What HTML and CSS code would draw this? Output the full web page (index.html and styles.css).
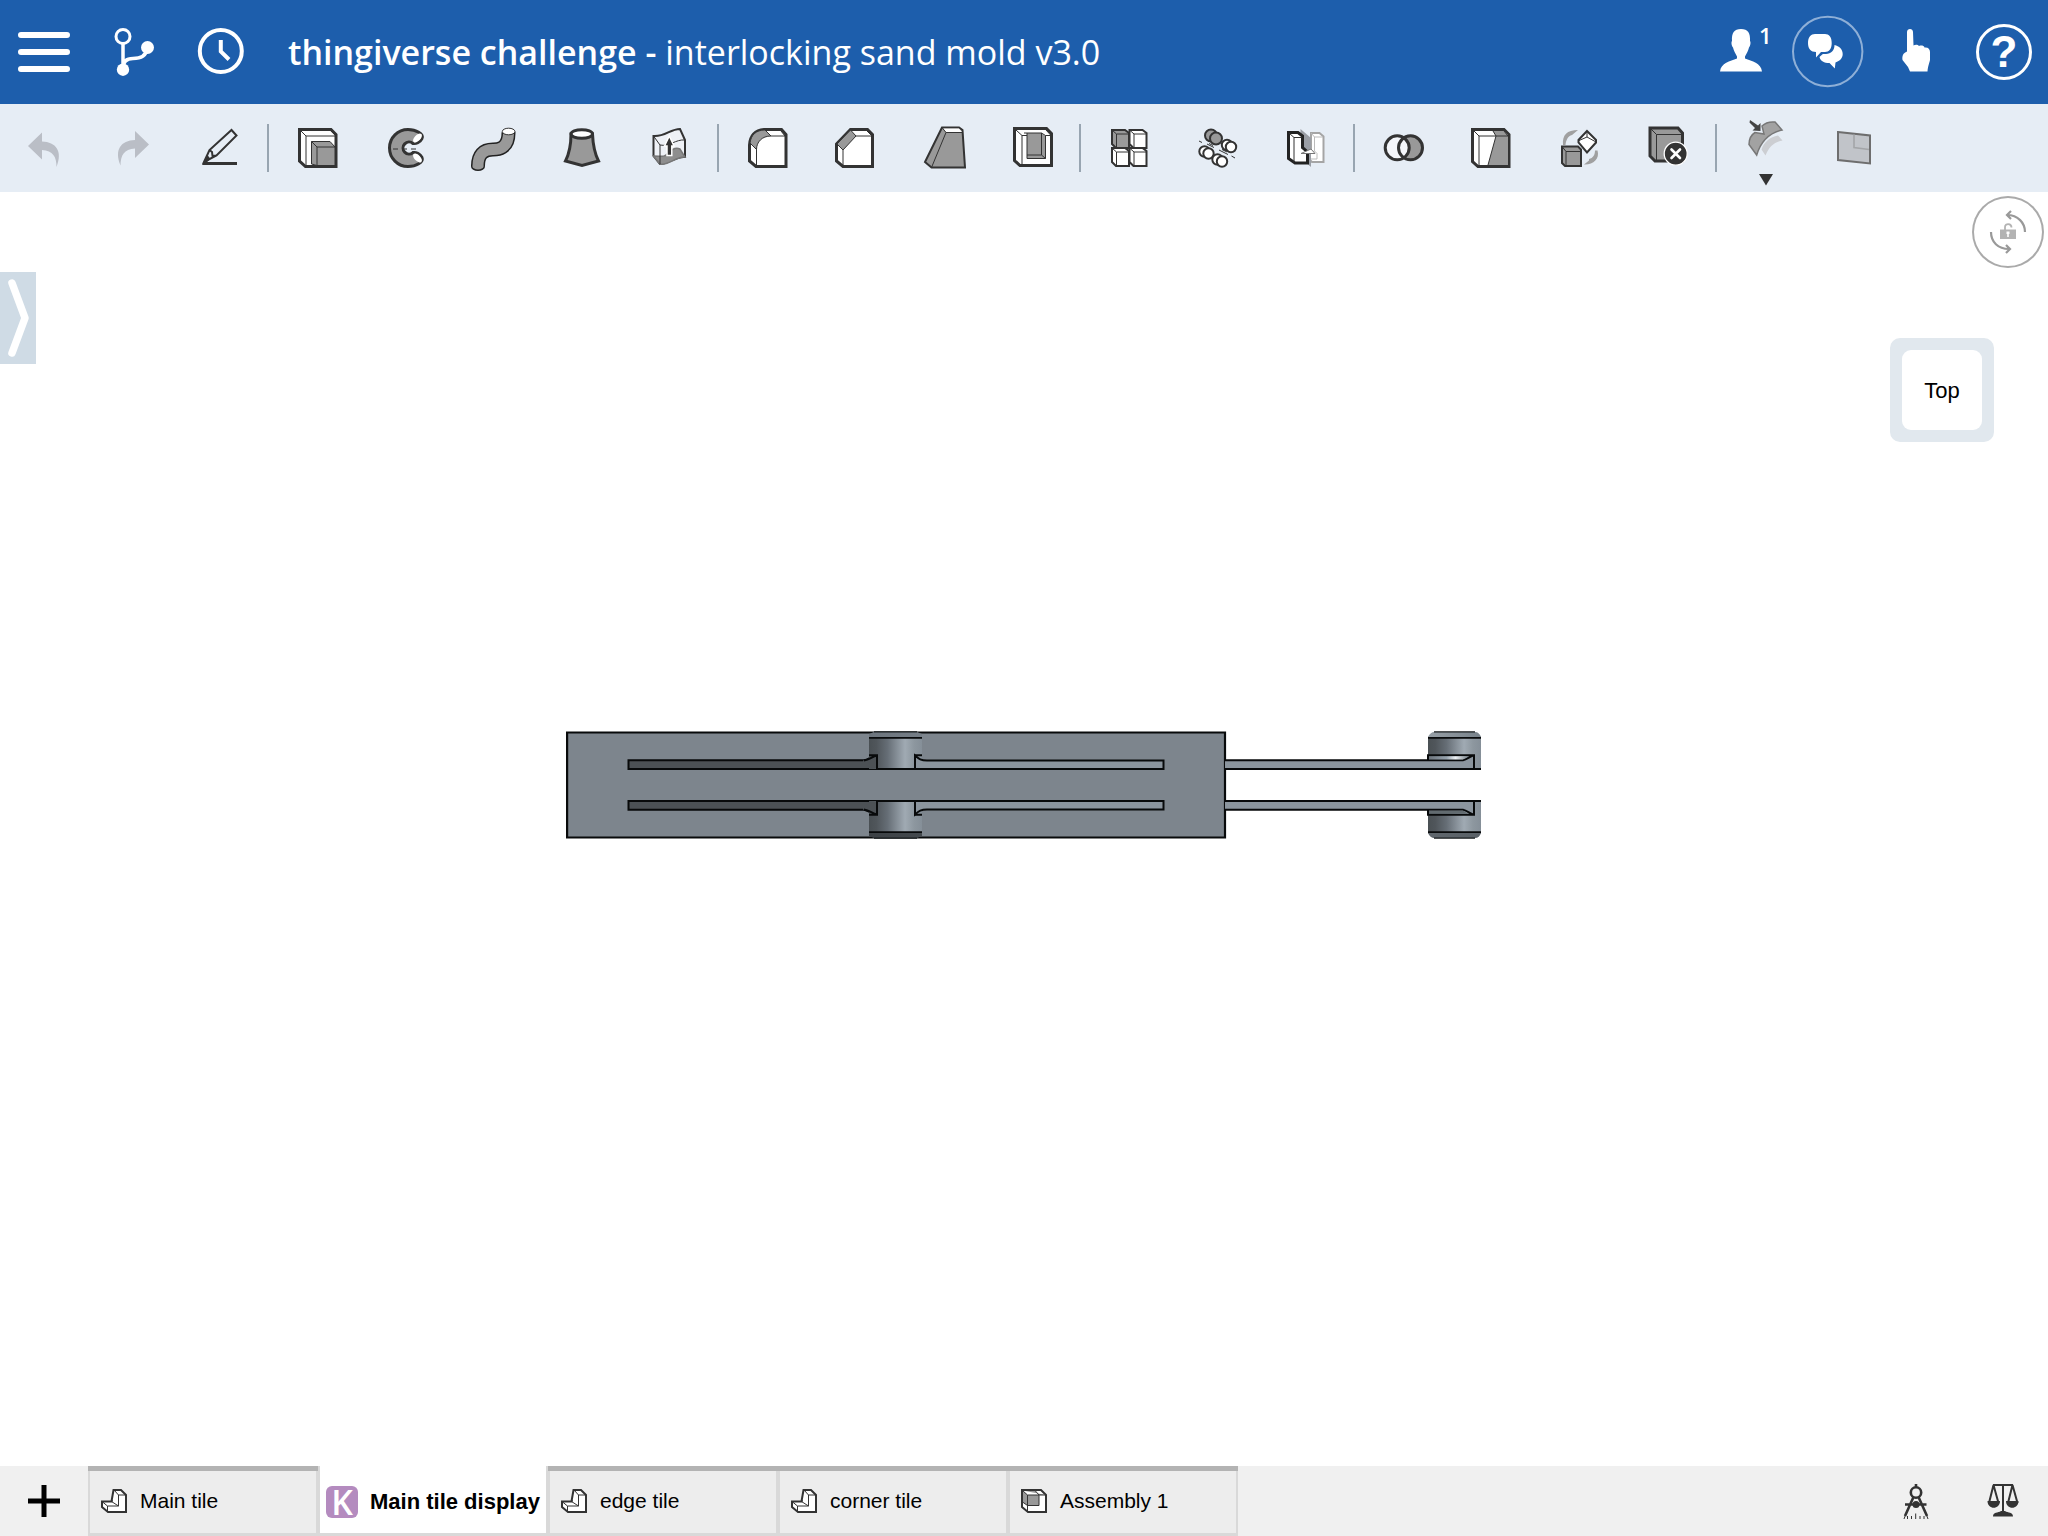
FILE: index.html
```html
<!DOCTYPE html>
<html lang="en">
<head>
<meta charset="utf-8">
<meta name="viewport" content="width=device-width, initial-scale=1">
<title>thingiverse challenge - interlocking sand mold v3.0</title>
<link rel="stylesheet" href="styles.css">
</head>
<body>
<header class="header">
  <button class="hbtn" aria-label="Menu"><svg viewBox="0 0 88 104"><path class="w" stroke-width="6" stroke-linecap="round" d="M21 35H67M21 52H67M21 69H67"/></svg></button>
  <button class="hbtn" aria-label="Versions"><svg viewBox="0 0 88 104"><circle class="w" stroke-width="3" cx="35" cy="36.500" r="7"/><path class="w" stroke-width="3.500" d="M35 44V68C35 60 40 58.500 45 58.500C53 58.500 58 56 59 49"/><circle cx="35" cy="69.700" r="6.200" fill="#fff"/><circle cx="59.500" cy="47.500" r="6.500" fill="#fff"/></svg></button>
  <button class="hbtn" aria-label="History"><svg viewBox="0 0 88 104"><circle class="w" stroke-width="4" cx="44.800" cy="51" r="21"/><path class="w" stroke-width="4" d="M44.800 40V51.500L53 59.500"/></svg></button>
  <h1 class="title"><b>thingiverse challenge - </b>interlocking sand mold v3.0</h1>
  <button class="hbtn" aria-label="Collaborators"><svg viewBox="0 0 88 104"><path fill="#fff" d="M45 29C38 29 35.500 33 36 41C35 42 35.500 46 37 47.500C38 51 39 53 41 56.500V58.500C34 61 25 63 24 71.500H66C65 63 56 61 49 58.500V56.500C51 53 52 51 53 47.500C54.500 46 55 42 54 41C54.500 33 52 29 45 29Z"/></svg><span class="count">1</span></button>
  <button class="hbtn" aria-label="Comments"><svg viewBox="0 0 88 104"><circle cx="43.700" cy="51.500" r="34.700" fill="none" stroke="#8eafd7" stroke-width="2"/><path fill="#fff" d="M31 34H41C45 34 47.700 37 47.700 43C47.700 49 45 52 41 52H37L32 57.500V52C27 52 24 49 24 43C24 37 27 34 31 34Z"/><path fill="#fff" d="M50.500 45C55 46 58.700 49 58.700 54C58.700 58 56 61 51.500 62.500L50.800 68.500L45.500 63C40 63 36.500 61 35.500 57C37 55.500 38 54.500 39 54H42C47 54 50.500 50.500 50.500 45Z"/></svg></button>
  <button class="hbtn" aria-label="Touch mode"><svg viewBox="0 0 88 104"><path fill="#fff" d="M35 32C35 28 41 28 41 32L41.500 45.500C43 44.500 46 44.500 47 46C49 45 52 45.500 52.500 47.500C56 47 58 49 58 52V60C57 64 56 66 55.500 71.500H38L36 67L30.500 60C30 56 31 53 35 51.500Z"/></svg></button>
  <button class="hbtn" aria-label="Help"><span class="help">?</span></button>
</header>

<nav class="toolbar" aria-label="Features">
  <button class="tool" aria-label="Undo"><svg viewBox="0 0 88 88"><path fill="#babec6" d="M28 42L42 28.500V37.500C56 38 63 47 56.500 63C56.500 53 53 46.500 42 46V55.500Z"/></svg></button>
  <button class="tool" aria-label="Redo"><svg viewBox="0 0 88 88"><path fill="#babec6" d="M61 40.500L47 27V36C33 36.500 26 45.500 32.500 61.500C32.500 51.500 36 45 47 44.500V54Z"/></svg></button>
  <button class="tool" aria-label="Sketch"><svg viewBox="0 0 88 88"><path class="o2" fill="none" d="M28 58L33.500 46L55.500 26L60.500 31.500L40.500 51.500ZM33.500 46L36 48L36.500 52L40.500 51.500"/><path fill="#333" d="M26 61L31.500 51L34.500 55L31 58H61V61Z"/></svg></button>
  <span class="sep"></span>
  <button class="tool" aria-label="Extrude"><svg viewBox="0 0 88 88"><path class="o3" fill="#fff" d="M25.500 25.500H57L62 30.500V62.500H31.500L25.500 57Z"/><path class="o1" fill="none" d="M27 27L32 32H62M32 32V62M57 27L61 31"/><path class="o1" fill="#999" d="M37.500 37.500H56L61 43V61.500H43L37.500 60ZM37.500 37.500L43 43V61M43 43H61"/></svg></button>
  <button class="tool" aria-label="Revolve"><svg viewBox="0 0 88 88"><path class="o3" fill="#999" d="M46 25.500A18.500 18.500 0 0 0 46 62.500C54 62.500 62 58 60 53.500C58 49.500 54 48 51 48.500A6 6 0 1 1 51 39.500C54 40 58 38.500 60 34.500C62 30 54 25.500 46 25.500Z"/><ellipse fill="#fff" cx="55.500" cy="34" rx="5.500" ry="3" transform="rotate(-45 55.500 34)"/><ellipse fill="#fff" cx="55.500" cy="54" rx="5.500" ry="3" transform="rotate(45 55.500 54)"/><path class="o1" stroke-width="2" stroke-dasharray="5 4" d="M31 45H56"/></svg></button>
  <button class="tool" aria-label="Sweep"><svg viewBox="0 0 88 88"><g fill="none"><path stroke="#222" stroke-width="14" d="M58.500 28C59 46 46 45.500 43 45.500C33 45.500 28 51 28 62"/><ellipse cx="28" cy="62.500" rx="7" ry="4.500" fill="#222"/><path stroke="#999" stroke-width="11" d="M58.500 28C59 46 46 45.500 43 45.500C33 45.500 28 51 28 62"/><ellipse cx="28" cy="62.500" rx="5.500" ry="3" fill="#999"/></g><ellipse class="o1" fill="#fff" cx="58.600" cy="27.500" rx="6.300" ry="3.300" stroke-width="1.500"/></svg></button>
  <button class="tool" aria-label="Loft"><svg viewBox="0 0 88 88"><path class="o3" fill="#999" d="M33 30C33 42 31 50 27.500 57L44 61.500L60.500 57C57 50 55 42 54.500 30Z"/><ellipse class="o3" fill="#fff" cx="43.800" cy="30" rx="10.700" ry="4.300"/></svg></button>
  <button class="tool" aria-label="Thicken"><svg viewBox="0 0 88 88"><path class="o2" fill="#eef1f6" d="M27.500 32C39 33 44 25 54 25L59 36V53C50 52 43 60 34 60L27.500 52Z"/><path fill="#8e8e8e" stroke="#777" stroke-width="1.500" d="M27.500 52C35 52 38 54 42 49C46 45 50 43 54 45L59 53C50 52 43 62 34 60Z"/><path class="o1" fill="none" d="M27.500 32L34 41V60M34 41C43 43 50 35 59 36"/><path fill="#333" stroke="#fff" stroke-width="1.500" d="M43.300 32L48 42H45.800V51.500H41V42H38.500Z"/></svg></button>
  <span class="sep"></span>
  <button class="tool" aria-label="Fillet"><svg viewBox="0 0 88 88"><path class="o3" fill="#fff" d="M25.500 41C26 32 31 26 40 25.500H57.500L62 30.500V62.500H32L25.500 57Z"/><path class="o1" fill="#999" d="M26 39C27 31 32 26 41 26L47 32C38 32 32.500 38 32.500 45.500Z"/><path class="o1" fill="none" d="M32.500 45V62M47 32H61L57 27"/></svg></button>
  <button class="tool" aria-label="Chamfer"><svg viewBox="0 0 88 88"><path class="o3" fill="#fff" d="M24.500 40L38.500 25.500H55.500L60.500 30.500V62.500H31L24.500 57Z"/><path class="o1" fill="#999" d="M25 40L38.500 26L44 32L31 46Z"/><path class="o1" fill="none" d="M31 46V62M44 32H60L55 27"/></svg></button>
  <button class="tool" aria-label="Draft"><svg viewBox="0 0 88 88"><path class="o2" fill="#999" d="M42 23.500H59L62.500 26L65 63.500H31.500L25 58Z"/><path fill="#fff" d="M43 24.500H59L62 28H46Z"/><path class="o1" stroke-width="1.500" fill="none" d="M42 23.500L46 28.500H62M46 28.500L31.500 63.500"/></svg></button>
  <button class="tool" aria-label="Shell"><svg viewBox="0 0 88 88"><path class="o3" fill="#fff" d="M26.500 24.500H58.500L63.500 29.500V61.500H32L26.500 56.500Z"/><path fill="#999" d="M39 29H53L57.500 32V54.500H39Z"/><path class="o1" fill="none" d="M28 26L34 31.500V60M34 31.500H39M39 29V54.500H57.500V31.500L53.500 29V51L57.500 54.500M39 51H53.500M36 29H53.500M57.500 31.500H63L58 26"/></svg></button>
  <span class="sep"></span>
  <button class="tool" aria-label="Linear pattern"><svg viewBox="0 0 88 88"><defs><g id="cube"><path class="o2" d="M1 1H14L18 4V19H5L1 15Z"/><path class="o1" fill="none" d="M1 1L5.500 5H18M5.500 5V18"/></g></defs><use href="#cube" x="25" y="25" fill="#999"/><use href="#cube" x="42.500" y="25" fill="#fff"/><use href="#cube" x="25" y="43" fill="#fff"/><use href="#cube" x="42.500" y="43" fill="#fff"/></svg></button>
  <button class="tool" aria-label="Circular pattern"><svg viewBox="0 0 88 88"><g class="o2" fill="#999"><circle cx="37" cy="31.500" r="6"/><circle cx="42" cy="34.500" r="6"/></g><g class="o2" fill="#fff"><circle cx="53" cy="41" r="5.200"/><circle cx="57" cy="43" r="5.200"/><circle cx="30.500" cy="47.500" r="5.200"/><circle cx="34.500" cy="49.500" r="5.200"/><circle cx="43.500" cy="55.500" r="5.200"/><circle cx="48" cy="57.500" r="5.200"/></g><path class="o1" fill="none" d="M25 37L28 38.500M33 40L40 43.500M35 39.500L39 41.500M45 46L54 50.500M48 45.500L53 48M57.500 52L61 54"/></svg></button>
  <button class="tool" aria-label="Mirror"><svg viewBox="0 0 88 88"><path fill="#fff" stroke="#a5a5a5" stroke-width="2" d="M49 29H57.500L61.500 32.500V58H50L47 55V49L49 47Z"/><path fill="none" stroke="#bbb" stroke-width="1" d="M49 29L52.500 33H61M52.500 33V47L47 49M52.500 47L55 49.500V55H47"/><path fill="#9a9ea5" d="M38.500 25L49 34V63L38.500 54Z"/><path stroke="#222" stroke-width="3" fill="#fff" d="M26.500 28.500H36L40.500 32V43.500L45.500 48V59H33L26.500 54.500Z"/><path class="o1" fill="none" d="M27 29L32 33.500H40M32 33.500V58"/><path fill="#fff" stroke="#777" stroke-width="1" d="M39 49.500L49 45L53 49.500Z"/></svg></button>
  <span class="sep"></span>
  <button class="tool" aria-label="Boolean"><svg viewBox="0 0 88 88"><circle cx="50.500" cy="43.800" r="12" fill="#999"/><circle cx="37.200" cy="43.800" r="12" fill="#f4f6fa"/><g class="o3" fill="none"><circle cx="50.500" cy="43.800" r="12"/><circle cx="37.200" cy="43.800" r="12"/></g></svg></button>
  <button class="tool" aria-label="Split"><svg viewBox="0 0 88 88"><path class="o3" fill="#fff" d="M24.500 25.500H56L61 30.500V62.500H30L24.500 57.500Z"/><path fill="#999" d="M45 27H56L60 31V61H40L48 32Z"/><path class="o1" fill="none" d="M26 27L31 32H60L56 27M31 32V61M45 27L48 32L40 61"/></svg></button>
  <button class="tool" aria-label="Transform"><svg viewBox="0 0 88 88"><path fill="#a0a0a0" d="M27 41C26 31 31 26 42 26L36 31C32 32 30 36 29.500 41ZM59 46.500H61.500C64 55 57 61 48 60.500L53 56.500V55C57 54 59 51 59 46.500Z"/><path class="o2" fill="#999" d="M26 42.500H42L45 45.500V62H29L26 59Z"/><path class="o1" fill="none" d="M26 42.500L30 47.500H45M30 47.500V62"/><path class="o2" fill="#fff" d="M51 27L60 36V38.500L51 48.500L42.500 38.500V36Z"/><path class="o1" fill="none" d="M51 33L42 37M51 33V27M51 33L60 38"/></svg></button>
  <button class="tool" aria-label="Delete part"><svg viewBox="0 0 88 88"><path class="o3" fill="#999" d="M26 24H54L58.500 29V57H31L26 52Z"/><path class="o1" fill="none" d="M27 25L32.500 30.500H58M32.500 30.500V57"/><circle cx="51.700" cy="49.700" r="11.500" fill="#333" stroke="#fff" stroke-width="1.300"/><path class="w" stroke-width="2.600" stroke-linecap="round" d="M47.500 45.500L56 54M56 45.500L47.500 54"/></svg></button>
  <span class="sep"></span>
  <button class="tool" aria-label="Modify surface"><svg viewBox="0 0 88 88"><path fill="#ccced2" d="M39.500 45.500L43.500 51.500C47 43 52 38 60.500 36.500L56 31.500C48 33 42 38 39.500 45.500Z"/><path fill="#a2a2a2" stroke="#777" stroke-width="1.500" d="M33 28.500C29 31 27 36 27 40.500L34.700 51C39 37 47 29 60 26L53 18C48 17.500 43 19 40 22L42 30Z"/><path fill="#444" d="M28 16L36 21.500L38.500 19L38.500 27L30.500 26.500L33 24L27.500 18.500Z"/><path fill="#333" d="M37 70H51L44 81.500Z"/></svg></button>
  <button class="tool" aria-label="Plane"><svg viewBox="0 0 88 88"><path fill="#c1c4c9" stroke="#6e6e6e" stroke-width="2" d="M28 28L60 31.500V59.500L28 56Z"/><path fill="none" stroke="#a3a5a8" stroke-width="1.600" d="M44 30.500V43.500L59 45.500"/></svg></button>
</nav>

<main class="canvas">
  <button class="panel-handle" aria-label="Open feature list"><svg viewBox="0 0 36 92"><path class="w" stroke-width="7.500" stroke-linecap="round" stroke-linejoin="round" d="M12 11L25 46L12 81"/></svg></button>
  <button class="rotate-lock" aria-label="Rotation lock"><svg viewBox="0 0 72 72"><g fill="none" stroke="#999" stroke-width="2.200"><path d="M53 36C53 27 46 19 35 19M39 15L35 19L39 23M19 36C19 46 26 53 37 53M34 49L38 53L34 57"/></g><path fill="none" stroke="#b3b3b3" stroke-width="1.800" d="M33 34V31C33 27 39.500 27 39.500 31.500"/><path fill="#b3b3b3" d="M28 33.500H44V43H28Z"/><path fill="#fff" d="M34.500 35.500H37.500V38H36.800V41H35.200V38H34.500Z"/></svg></button>
  <button class="view-cube">Top</button>
  <svg class="model" viewBox="0 0 916 110" role="img" aria-label="Top view of the main tile">
    <defs>
      <linearGradient id="peg"><stop offset="0" stop-color="#4a5054"/><stop offset=".14" stop-color="#50565b"/><stop offset=".35" stop-color="#666e76"/><stop offset=".68" stop-color="#a0aab3"/><stop offset=".85" stop-color="#8d979f"/><stop offset="1" stop-color="#858f98"/></linearGradient>
      <linearGradient id="rim"><stop offset="0" stop-color="#6d757d"/><stop offset=".45" stop-color="#96a2ad"/><stop offset=".68" stop-color="#eef2f5"/><stop offset="1" stop-color="#78828a"/></linearGradient>
      <linearGradient id="rimlow"><stop offset="0" stop-color="#3c4145"/><stop offset=".6" stop-color="#727a81"/><stop offset="1" stop-color="#5a6167"/></linearGradient>
      <g id="half" stroke="#080a0b" stroke-width="2">
        <path fill="#4c5155" d="M62.500 30.300H298C303 29.500 305 26 311 25.500V39H62.500Z"/>
        <path fill="url(#peg)" stroke="none" d="M303 4H356V39H303Z"/>
        <path fill="#4c5155" stroke="none" d="M297 30.500C303 29 305 26 311 25.500V38H297Z"/>
        <path fill="#8b959e" d="M349 25.500C353 29 355 30.500 361 30.500H597.500V39H349Z"/>
        <path fill="none" d="M303 7.700H356M303 25.300H311V39H349V25.300H356M298 30.500C304 29.500 306 26.500 311 25.500"/>
        <path fill="url(#peg)" stroke="none" d="M862 7H915V39H862Z"/>
        <path fill="#8b959e" stroke="none" d="M659 30H898L907 26V39H659Z"/>
        <path fill="none" d="M659 30.300H897C901 29.500 904 26.500 908 25.300M862 30V25.300H908V39M659 39H915M862 7.700H915"/>
      </g>
    </defs>
    <path fill="#7d858d" stroke="#080a0b" stroke-width="2.200" d="M1.100 2.500H659V107.500H1.100Z"/>
    <use href="#half"/>
    <use href="#half" transform="matrix(1 0 0 -1 0 110)"/>
    <path fill="url(#rim)" d="M303 7V4L308 2H351L356 4V7ZM862 7C863 4 866 2 868 2H909C912 2 914 4 915 7Z"/>
    <path fill="url(#rimlow)" d="M303 103V106L308 108H351L356 106V103ZM862 103C863 106 866 108 868 108H909C912 108 914 106 915 103Z"/>
    <path fill="url(#rim)" d="M863 26.200H902L897 29.500H863Z"/>
    <path fill="#626b70" d="M863 80.500H897L902 83.800H863Z"/>
    <path fill="none" stroke="#15181a" stroke-width="1.200" d="M308 1.800H351M308 108.200H351M868 1.800H909M868 108.200H909"/>
  </svg>
</main>

<footer class="tabbar">
  <button class="add" aria-label="Insert new element"><svg viewBox="0 0 88 70"><path stroke="#000" stroke-width="5" d="M28 35H60M44 19V51"/></svg></button>
  <button class="tab"><svg class="tabicon" viewBox="0 0 26 24"><path class="o2" fill="#fff" d="M1 12.500H10.500L12.500 1H20L25 6V23H7L1 18Z"/><path class="o1" fill="none" d="M1 12.500L6.500 17H17.500V6L13 1M17.500 6H25M6.500 17V22M10.500 12.500L17.500 17M10.500 12.500L12 11.500"/></svg><span>Main tile</span></button>
  <button class="tab active"><span class="k">K</span><span>Main tile display</span></button>
  <button class="tab"><svg class="tabicon" viewBox="0 0 26 24"><path class="o2" fill="#fff" d="M1 12.500H10.500L12.500 1H20L25 6V23H7L1 18Z"/><path class="o1" fill="none" d="M1 12.500L6.500 17H17.500V6L13 1M17.500 6H25M6.500 17V22M10.500 12.500L17.500 17M10.500 12.500L12 11.500"/></svg><span>edge tile</span></button>
  <button class="tab"><svg class="tabicon" viewBox="0 0 26 24"><path class="o2" fill="#fff" d="M1 12.500H10.500L12.500 1H20L25 6V23H7L1 18Z"/><path class="o1" fill="none" d="M1 12.500L6.500 17H17.500V6L13 1M17.500 6H25M6.500 17V22M10.500 12.500L17.500 17M10.500 12.500L12 11.500"/></svg><span>corner tile</span></button>
  <button class="tab"><svg class="tabicon" viewBox="0 0 26 24"><path class="o2" fill="#fff" d="M1 1H20L25 6V23H7L1 18Z"/><path class="o1" fill="#999" d="M1.500 1.500H14L18 6V16.500H6.500L1.500 13ZM1.500 1.500L6.500 6H25M6.500 6V22"/></svg><span>Assembly 1</span></button>
  <span class="grow"></span>
  <button class="add" aria-label="Measure"><svg viewBox="0 0 88 70"><g fill="none" stroke="#333"><circle cx="44" cy="26.500" r="5.200" stroke-width="2.600"/><path stroke-width="2.600" d="M44 18V22M33 38.500H54.500M41.500 31L33 50M46.500 31L55 50"/><path stroke-width="1" d="M33.500 49L32 53M54.500 49L56 53M35.500 50V53M39.500 50V53M43.700 47.500V53M48 50V53M52 50V53"/></g><circle cx="44" cy="38.500" r="3.500" fill="#333"/></svg></button>
  <button class="add" aria-label="Mass properties"><svg viewBox="0 0 88 70"><path fill="none" stroke="#333" stroke-width="2" d="M33 19H53M43 19V46M33.500 19L29 37M33.500 19L38.500 37M52.500 19L48 37M52.500 19L57.500 37"/><path fill="#333" d="M27.500 35H40C40 44 27.500 44 27.500 35ZM46 35H58.500C58.500 44 46 44 46 35ZM33 50.500C33 46 38 47 41 45H45C48 47 53 46 53 50.500Z"/></svg></button>
</footer>
</body>
</html>
```
FILE: styles.css
```css
* { box-sizing: border-box; }
body {
  margin: 0;
  min-height: 100vh;
  display: flex;
  flex-direction: column;
  background: #fff;
  color: #000;
  font-family: "Liberation Sans", Arial, sans-serif;
}
button {
  margin: 0;
  padding: 0;
  border: 0;
  background: none;
  color: inherit;
  font: inherit;
}
svg { display: block; }

/* shared icon strokes */
.w { fill: none; stroke: #fff; }
.o1 { stroke: #333; stroke-width: 1; }
.o2 { stroke: #333; stroke-width: 2; }
.o3 { stroke: #333; stroke-width: 3; }

.header {
  display: flex;
  align-items: center;
  height: 104px;
  background: #1d5eac;
  color: #fff;
  font-family: "Open Sans", sans-serif;
}
.hbtn {
  position: relative;
  display: grid;
  place-items: center;
  flex: none;
  width: 88px;
  height: 104px;
}
.hbtn svg { width: 88px; height: 104px; }
.title {
  flex: 1;
  margin: 0;
  padding-left: 24px;
  font-size: 34px;
  font-weight: 400;
  line-height: 48px;
  white-space: nowrap;
}
.title b { font-weight: 600; }
.count {
  position: absolute;
  left: 63px;
  top: 19px;
  font-size: 22px;
  font-weight: 600;
  line-height: 32px;
}
.help {
  width: 56px;
  height: 56px;
  border: 3px solid #fff;
  border-radius: 50%;
  font: 700 44px/50px "Liberation Sans", Arial, sans-serif;
  text-align: center;
}

.toolbar {
  display: flex;
  align-items: center;
  height: 88px;
  background: #e6edf5;
}
.tool { flex: none; width: 88px; height: 88px; }
.sep {
  flex: none;
  width: 2px;
  height: 48px;
  margin: 0 5px 0 3px;
  background: #98a5b1;
}

.canvas {
  position: relative;
  flex: 1;
  min-height: 480px;
  overflow: hidden;
}
.panel-handle {
  position: absolute;
  left: 0;
  top: 80px;
  width: 36px;
  height: 92px;
  background: #cfdbe5;
}
.rotate-lock {
  position: absolute;
  right: 4px;
  top: 4px;
  width: 72px;
  height: 72px;
  border-radius: 50%;
  box-shadow: inset 0 0 0 2px #aaa;
}
.view-cube {
  position: absolute;
  right: 54px;
  top: 146px;
  width: 104px;
  height: 104px;
  border: 12px solid #e1e8ee;
  border-radius: 10px;
  background: #e1e8ee;
  font-size: 22px;
  line-height: 82px;
  z-index: 0;
}
.view-cube::before {
  content: "";
  position: absolute;
  inset: 0;
  border-radius: 9px;
  background: #fff;
  z-index: -1;
}
.model {
  position: absolute;
  left: calc(50% - 458px);
  top: calc(50% - 99px);
  width: 916px;
  height: 110px;
}

.tabbar {
  display: flex;
  height: 70px;
  background: #f0f0f0;
}
.add { flex: none; width: 88px; height: 70px; }
.grow { flex: 1; }
.tab {
  position: relative;
  display: flex;
  align-items: center;
  gap: 13px;
  flex: none;
  width: 230px;
  padding: 2px 0 0 11px;
  border: solid #d9d9d9;
  border-width: 0 2px 3px;
  background: #ededed;
  font-size: 21px;
  line-height: 24px;
  white-space: nowrap;
}
.tab::before {
  content: "";
  position: absolute;
  left: -2px;
  right: -2px;
  top: 0;
  height: 5px;
  background: #b3b3b3;
}
.tabicon { width: 26px; height: 24px; }
.tab.active {
  gap: 12px;
  padding: 4px 0 0 6px;
  background: #fff;
  font-size: 22px;
  font-weight: 700;
}
.tab.active::before { display: none; }
.k {
  width: 32px;
  height: 32px;
  border-radius: 6px;
  background: #b48bbf;
  color: #fff;
  font: 600 34px/32px "Open Sans", sans-serif;
  text-align: center;
}
```
